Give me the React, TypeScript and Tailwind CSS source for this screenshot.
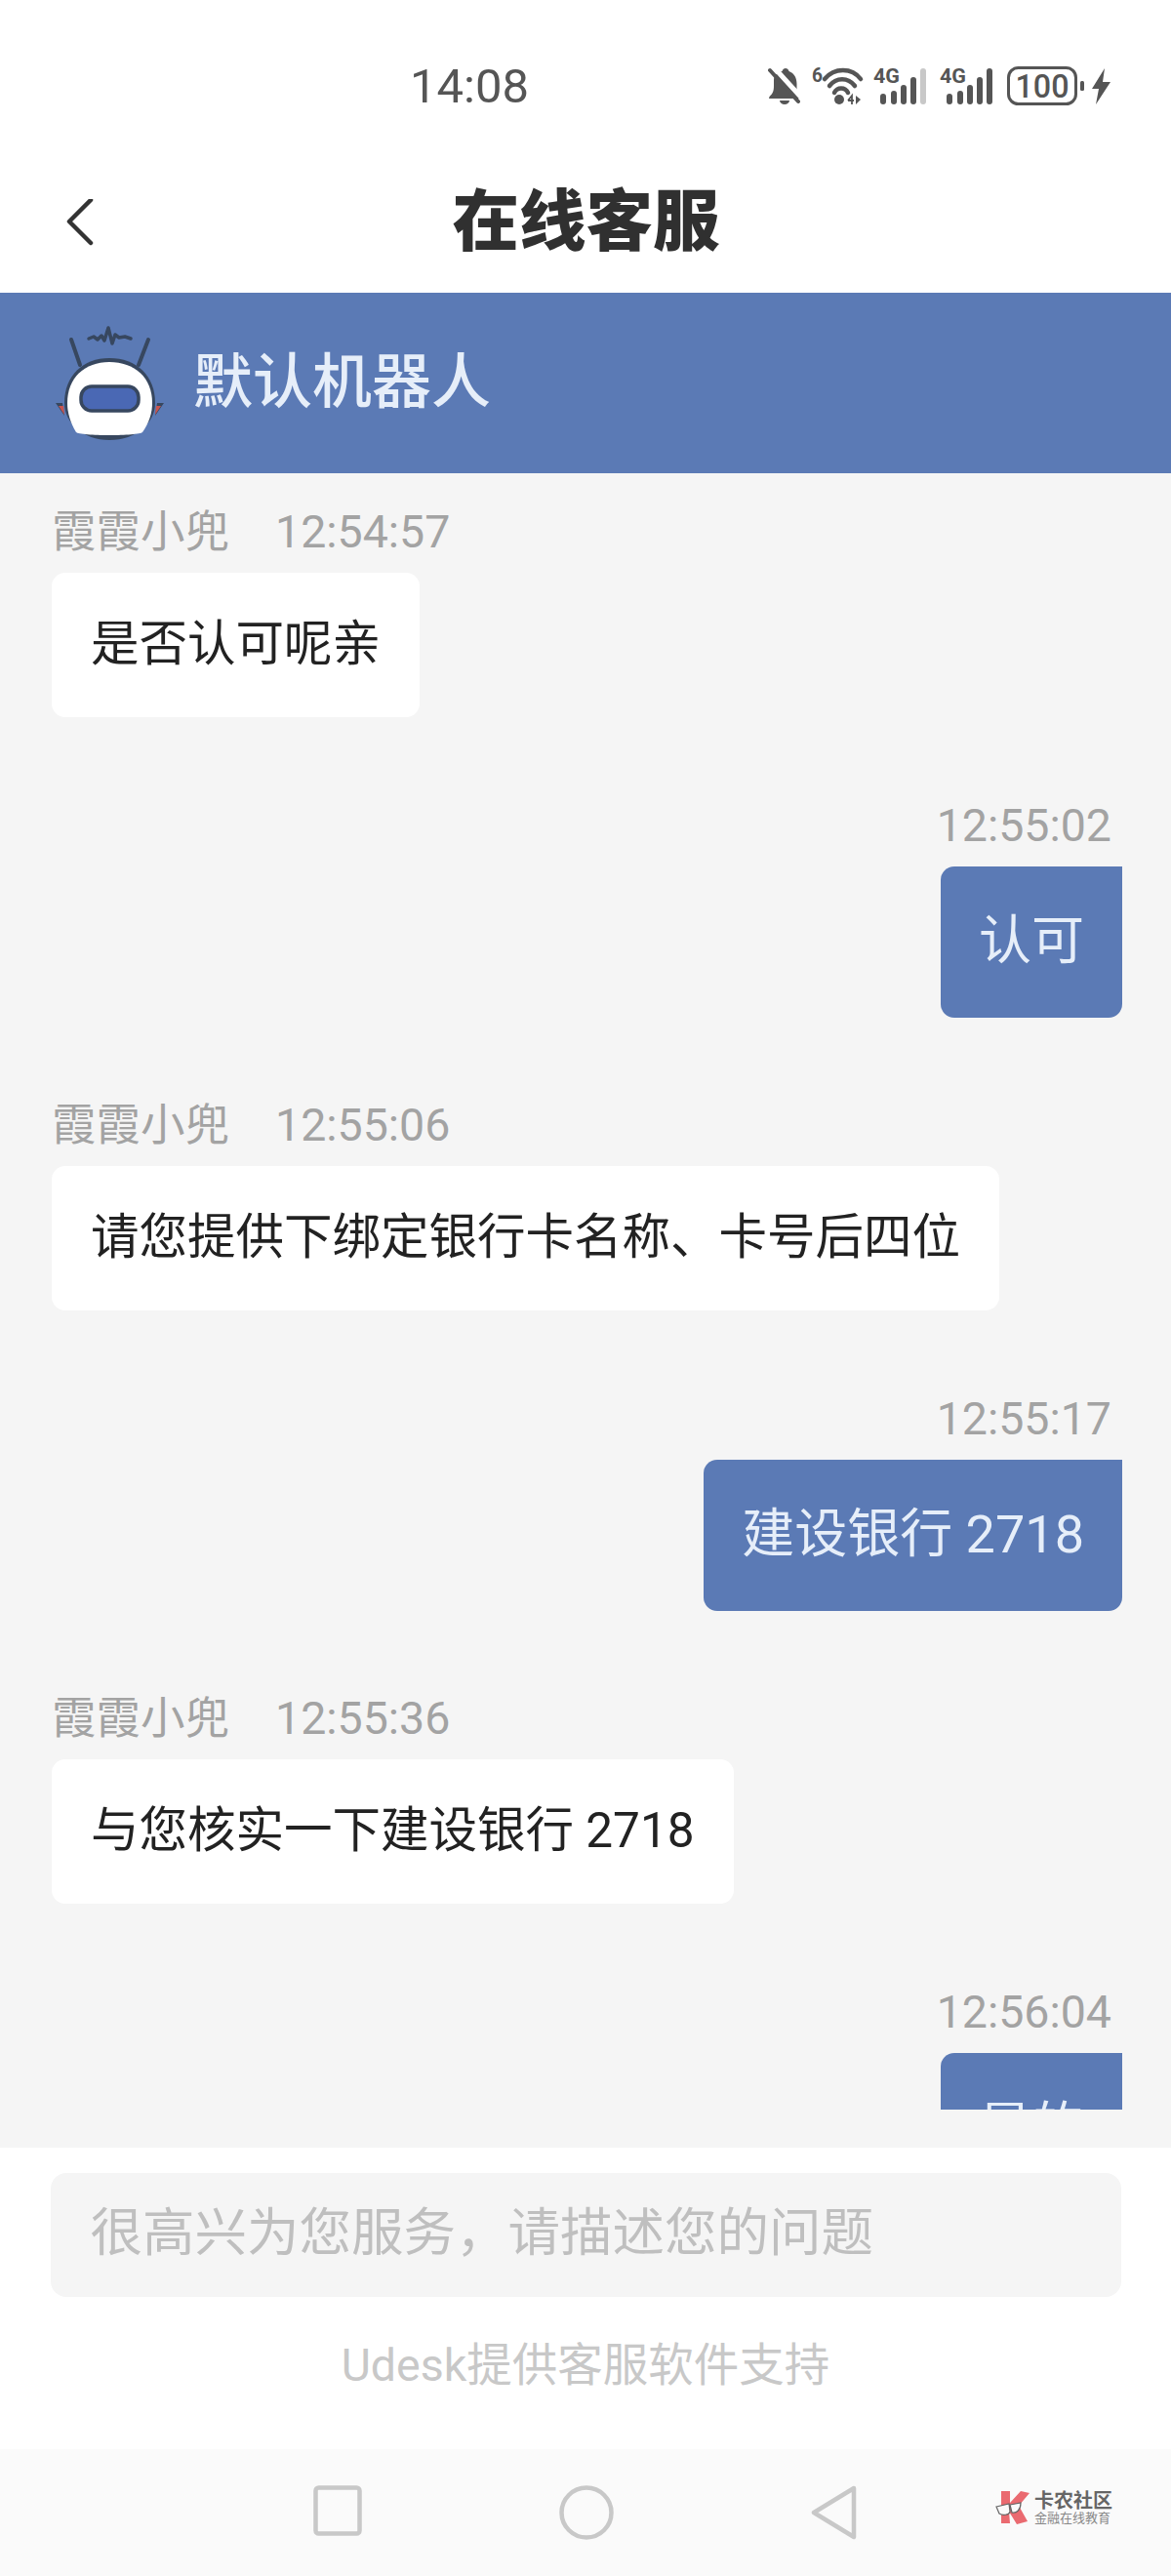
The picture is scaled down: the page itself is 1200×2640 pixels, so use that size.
import React from "react";

const FONT = "font-['Roboto','Noto_Sans_CJK_SC',sans-serif]";

function Bell() {
  return (
    <svg width="34" height="40" viewBox="0 0 34 40" className="shrink-0">
      <path d="M18 2c1.500 0 3 1 3.500 3 C27 7 29.500 12 29.500 18 L29.500 27 L33 33 L1 33 L1.500 31 C5 28 6 25 6 20 L6 14 C6 9 10 6 14.500 5 C15 3 16.500 2 18 2Z" fill="#555" />
      <path d="M12 35h10a5 4 0 0 1-10 0Z" fill="#555" />
      <path d="M5 3 L35 36" stroke="#fff" strokeWidth="5" transform="translate(1.500 -1.500)" />
      <path d="M2 4 L31 36" stroke="#555" strokeWidth="4" strokeLinecap="round" />
    </svg>
  );
}

function Wifi() {
  return (
    <svg width="54" height="40" viewBox="0 0 54 40" className="shrink-0 overflow-visible">
      <text x="2" y="16" fontFamily="Roboto" fontWeight="700" fontSize="21" fill="#555" textLength="11" lengthAdjust="spacingAndGlyphs">6</text>
      <path d="M15 13 C25 1 43 1 52 13" fill="none" stroke="#555" strokeWidth="4.500" strokeLinecap="round" />
      <path d="M20 20 C27 11 39 11 46 20" fill="none" stroke="#555" strokeWidth="4.500" strokeLinecap="round" />
      <path d="M25 27 C28 21 36 21 39 27" fill="none" stroke="#555" strokeWidth="4.500" strokeLinecap="round" />
      <circle cx="30" cy="34" r="5" fill="#555" />
      <path d="M39 35 L43 30 L43 39 M39 35 L45 35" fill="none" stroke="#555" strokeWidth="1.800" />
      <path d="M47 30 L47 39 L52 34Z" fill="#555" />
    </svg>
  );
}

function Signal({ dim }: { dim?: boolean }) {
  const bars = [
    [7, 28],
    [18, 25],
    [28, 19],
    [38, 11],
  ];
  return (
    <svg width="56" height="40" viewBox="0 0 56 40" className="shrink-0 overflow-visible">
      <text x="0" y="17" fontFamily="Roboto" fontWeight="700" fontSize="21" fill="#555" textLength="27" lengthAdjust="spacingAndGlyphs">4G</text>
      {bars.map(([x, y]) => (
        <rect key={x} x={x} y={y} width="6" height={39 - y} rx="3" fill="#555" />
      ))}
      <rect x="48" y="2" width="6" height="37" rx="3" fill={dim ? "#c8c8c8" : "#555"} />
    </svg>
  );
}

function Battery() {
  return (
    <svg width="106" height="40" viewBox="0 0 106 40" className="shrink-0 overflow-visible">
      <rect x="1.500" y="1.500" width="69" height="37" rx="10" fill="none" stroke="#555" strokeWidth="3" />
      <text x="36" y="32" textAnchor="middle" fontFamily="Roboto" fontWeight="500" fontSize="33" fill="#555" textLength="55" lengthAdjust="spacingAndGlyphs">100</text>
      <rect x="75" y="15" width="4" height="10" rx="1.500" fill="#555" />
      <path d="M100 2 L87 23 L94 23 L91 39 L106 16 L98 16Z" fill="#555" />
    </svg>
  );
}

function Robot() {
  return (
    <svg width="130" height="135" viewBox="0 0 130 135" className="shrink-0">
      <path d="M23 23 L32 49 M102 23 L92 49" stroke="#37475f" strokeWidth="4" strokeLinecap="round" />
      <path d="M41 22 L46 20 L50 23 L54 19 L57 24 L61 11 L65 27 L68 18 L72 21 L78 20 L84 22" fill="none" stroke="#37475f" strokeWidth="3.500" strokeLinecap="round" strokeLinejoin="round" />
      <path d="M7 88 L14 88 L16 101Z M118 88 L111 88 L109 101Z" fill="#37475f" />
      <path d="M10 91 L15 91 L16 100Z M115 91 L110 91 L109 100Z" fill="#c8544f" />
      <path d="M16 88 C16 60 35 42 62 42 C90 42 109 60 109 88 C109 108 90 126 62 126 C35 126 16 108 16 88Z" fill="#37475f" />
      <path d="M19 88 C19 62 37 46 62 46 C88 46 106 62 106 88 C106 98 103 108 96 118 C92 122 32 122 28 118 C22 108 19 98 19 88Z" fill="#fff" />
      <rect x="33" y="71" width="59" height="25" rx="11" fill="#4a68b4" stroke="#37475f" strokeWidth="3.500" />
    </svg>
  );
}

function LogoMark() {
  return (
    <svg width="36" height="36" viewBox="0 0 36 36" className="shrink-0">
      <path d="M6 1 L15 1 L15 13 L26 1 L35 3 L24 16 L33 32 L22 35 L14 22 L15 34 L6 34Z" fill="#ea6a70" />
      <path d="M1 17 L14 14 L15 22 C14 26 7 26 4 24Z M15 15 L26 13 C26 20 22 24 17 23Z" fill="#fafafa" stroke="#666" strokeWidth="1.200" />
    </svg>
  );
}

function Meta({ name, time }: { name?: string; time: string }) {
  return (
    <div className={`flex h-[60px] items-center pt-[3px] text-[#a3a3a3] leading-[57px] ${name ? "" : "justify-end pr-[11px]"}`}>
      {name && <span className="mr-[47px] text-[45.500px]">{name}</span>}
      <span className="text-[46.500px]">{time}</span>
    </div>
  );
}

function Left({ name, time, text }: { name: string; time: string; text: string }) {
  return (
    <div className="flex flex-col items-start">
      <Meta name={name} time={time} />
      <div className="mt-[13px] flex h-[148px] items-center rounded-[14px] bg-white px-[40px] pb-[2px] text-[49.500px] text-[#222] whitespace-nowrap">
        {text}
      </div>
    </div>
  );
}

function Right({ time, text }: { time: string; text: string }) {
  return (
    <div className="flex flex-col items-end">
      <Meta time={time} />
      <div className="mt-[13px] flex h-[155px] shrink-0 items-center rounded-[14px] rounded-tr-none bg-[#5b7ab5] px-[39px] pb-[2px] text-[54px] text-[#e6eef9] whitespace-nowrap">
        {text}
      </div>
    </div>
  );
}

export default function App() {
  return (
    <div className={`flex h-[2640px] w-[1200px] flex-col overflow-hidden bg-white ${FONT}`}>
      <div className="flex h-[154px] shrink-0 items-start pt-[66px]">
        <span className="ml-[420px] w-[120px] text-[49px] leading-[46px] font-normal text-[#555]">14:08</span>
        <div className="ml-[247px] mt-[2px] flex items-center">
          <Bell />
          <div className="ml-[9px]"><Wifi /></div>
          <div className="ml-[11px]"><Signal dim /></div>
          <div className="ml-[12px]"><Signal /></div>
          <div className="ml-[13px]"><Battery /></div>
        </div>
      </div>

      <div className="relative flex h-[146px] shrink-0 items-center justify-center pt-[3px]">
        <svg width="28" height="48" viewBox="0 0 28 48" className="absolute left-[68px] top-[50px]">
          <path d="M25 3 L3 25 L25 47" fill="none" stroke="#333" strokeWidth="4.500" strokeLinecap="round" strokeLinejoin="round" transform="translate(0 -2)" />
        </svg>
        <span className="pl-[1px] text-[68.500px] font-black text-[#303030]">在线客服</span>
      </div>

      <div className="flex h-[185px] shrink-0 items-center bg-[#5b7ab5] pl-[50px]">
        <Robot />
        <span className="ml-[18px] text-[61px] font-medium text-[#e6eef9]">默认机器人</span>
      </div>

      <div className="h-[1716px] shrink-0 bg-[#f5f5f5] pb-[39px]">
        <div className="h-full overflow-hidden">
          <div className="flex flex-col gap-[79.500px] px-[50px] pt-[29px]">
            <div className="pl-[3px]"><Left name="霞霞小兜" time="12:54:57" text="是否认可呢亲" /></div>
            <Right time="12:55:02" text="认可" />
            <div className="pl-[3px]"><Left name="霞霞小兜" time="12:55:06" text="请您提供下绑定银行卡名称、卡号后四位" /></div>
            <Right time="12:55:17" text="建设银行 2718" />
            <div className="pl-[3px]"><Left name="霞霞小兜" time="12:55:36" text="与您核实一下建设银行 2718" /></div>
            <Right time="12:56:04" text="是的" />
          </div>
        </div>
      </div>

      <div className="flex h-[309px] shrink-0 flex-col items-center bg-white pt-[26px]">
        <div className="flex h-[127px] w-[1097px] items-center rounded-[16px] bg-[#f5f5f5] px-[41px] pb-[2px] text-[53.500px] text-[#bfbfbf]">
          很高兴为您服务{"\uFF0C"}请描述您的问题
        </div>
        <div className="mt-[38px] text-[46.500px] leading-[64px] text-[#c8c8c8]">Udesk提供客服软件支持</div>
      </div>

      <div className="relative flex flex-1 items-start justify-center gap-[202px] bg-[#fafafa] pt-[37px]">
        <svg width="50" height="52" viewBox="0 0 50 52">
          <rect x="2.500" y="2.500" width="45" height="47" rx="3" fill="none" stroke="#c8c8c8" strokeWidth="4.500" />
        </svg>
        <svg width="56" height="56" viewBox="0 0 56 56">
          <circle cx="28" cy="28" r="25.500" fill="none" stroke="#c8c8c8" strokeWidth="4.500" />
        </svg>
        <svg width="48" height="56" viewBox="0 0 48 56">
          <path d="M44 3 L3 28 L44 53Z" fill="none" stroke="#c8c8c8" strokeWidth="4.500" strokeLinejoin="round" />
        </svg>
        <div className="absolute left-[1020px] top-[42px] flex items-center gap-[4px]">
          <LogoMark />
          <div className="flex flex-col">
            <span className="text-[20px] leading-[21px] font-bold text-[#666] whitespace-nowrap">卡农社区</span>
            <span className="text-[13px] leading-[14px] text-[#888] whitespace-nowrap">金融在线教育</span>
          </div>
        </div>
      </div>
    </div>
  );
}
